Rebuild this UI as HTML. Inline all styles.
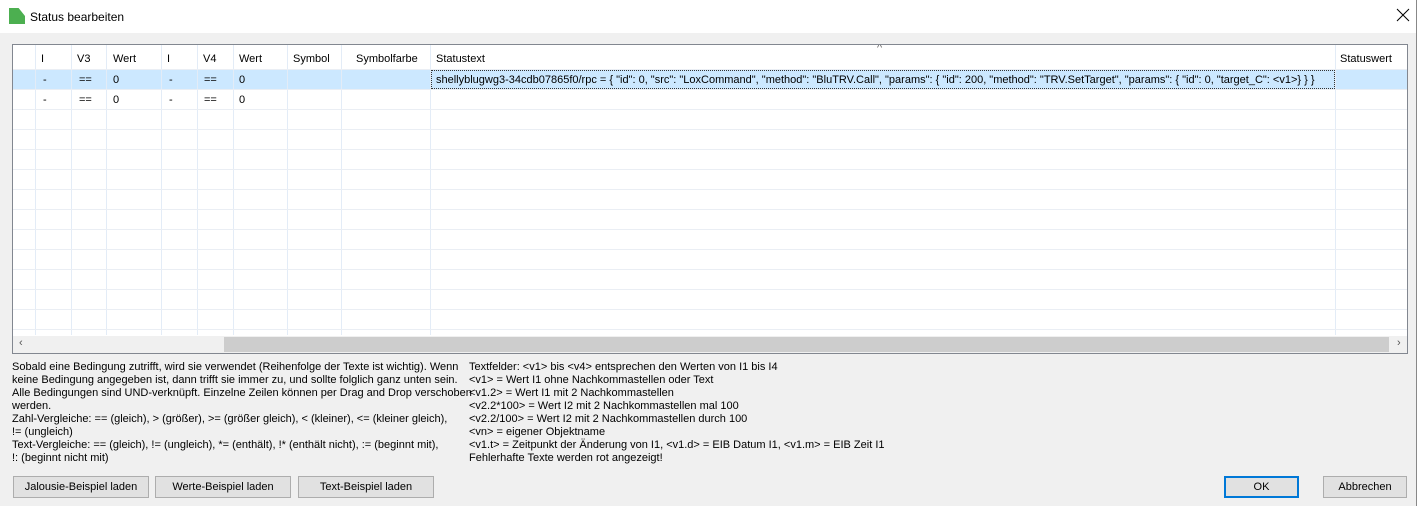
<!DOCTYPE html>
<html><head><style>
*{margin:0;padding:0;box-sizing:border-box}
body{width:1421px;height:506px;overflow:hidden;background:#fff;font-family:"Liberation Sans",sans-serif;font-size:11px;color:#000;position:relative}
.dlg{position:absolute;left:0;top:0;width:1417px;height:506px;background:#f0f0f0;border-right:1px solid #888}
.title{position:absolute;left:0;top:0;width:1416px;height:33px;background:#fff}
.title .t{position:absolute;left:30px;top:10px;font-size:12px}
.icon{position:absolute;left:9px;top:8px;width:16px;height:16px;background:#4caf50;clip-path:polygon(0 0,60% 0,100% 50%,100% 100%,0 100%)}
.x{position:absolute;left:1396px;top:8px;width:14px;height:14px}
.tbl{position:absolute;left:12px;top:44px;width:1396px;height:310px;border:1px solid #828790;background:#fff;overflow:hidden}
.vl{position:absolute;top:0;width:1px;height:290px;background:#e3ecf7}
.hl{position:absolute;left:0;width:1394px;height:1px;background:#eaeef4}
.c{position:absolute;white-space:nowrap}
.sel{position:absolute;left:0;top:24px;width:1394px;height:20px;background:#cce8ff}
.sb{position:absolute;left:0;top:291px;width:1394px;height:17px;background:#f0f0f0}
.thumb{position:absolute;left:211px;top:1px;width:1165px;height:15px;background:#cdcdcd}
.p{position:absolute;white-space:nowrap;line-height:13px}
.btn{position:absolute;top:476px;height:22px;background:#e1e1e1;border:1px solid #adadad;text-align:center;line-height:20px}
</style></head><body>
<div class="dlg">
<div class="title"><div class="icon"></div><div class="t">Status bearbeiten</div>
<svg class="x" viewBox="0 0 14 14"><path d="M1 1L13 13M13 1L1 13" stroke="#000" stroke-width="1"/></svg></div>
<div class="tbl">
<div class="sel"></div>
<div class="vl" style="left:22px"></div><div class="vl" style="left:58px"></div><div class="vl" style="left:93px"></div><div class="vl" style="left:148px"></div><div class="vl" style="left:184px"></div><div class="vl" style="left:220px"></div><div class="vl" style="left:274px"></div><div class="vl" style="left:328px"></div><div class="vl" style="left:417px"></div><div class="vl" style="left:1322px"></div>
<div class="hl" style="top:24px"></div><div class="hl" style="top:44px"></div><div class="hl" style="top:64px"></div><div class="hl" style="top:84px"></div><div class="hl" style="top:104px"></div><div class="hl" style="top:124px"></div><div class="hl" style="top:144px"></div><div class="hl" style="top:164px"></div><div class="hl" style="top:184px"></div><div class="hl" style="top:204px"></div><div class="hl" style="top:224px"></div><div class="hl" style="top:244px"></div><div class="hl" style="top:264px"></div><div class="hl" style="top:284px"></div>
<div class="c" style="left:864px;top:-3px;color:#666">^</div>
<div class="c" style="left:28px;top:8px">I</div><div class="c" style="left:64px;top:8px">V3</div><div class="c" style="left:100px;top:8px">Wert</div><div class="c" style="left:154px;top:8px">I</div><div class="c" style="left:190px;top:8px">V4</div><div class="c" style="left:226px;top:8px">Wert</div><div class="c" style="left:280px;top:8px">Symbol</div><div class="c" style="left:343px;top:8px">Symbolfarbe</div><div class="c" style="left:423px;top:8px">Statustext</div><div class="c" style="left:1327px;top:8px">Statuswert</div>
<div class="c" style="left:30px;top:29px">-</div><div class="c" style="left:66px;top:29px">==</div><div class="c" style="left:100px;top:29px">0</div><div class="c" style="left:156px;top:29px">-</div><div class="c" style="left:191px;top:29px">==</div><div class="c" style="left:226px;top:29px">0</div>
<div class="c" style="left:418px;top:25px;width:904px;height:19px;border:1px dotted #333;overflow:hidden;padding:3px 0 0 4px">shellyblugwg3-34cdb07865f0/rpc = { "id": 0, "src": "LoxCommand", "method": "BluTRV.Call", "params": { "id": 200, "method": "TRV.SetTarget", "params": { "id": 0, "target_C": &lt;v1&gt;} } }</div>
<div class="c" style="left:30px;top:49px">-</div><div class="c" style="left:66px;top:49px">==</div><div class="c" style="left:100px;top:49px">0</div><div class="c" style="left:156px;top:49px">-</div><div class="c" style="left:191px;top:49px">==</div><div class="c" style="left:226px;top:49px">0</div>
<div class="sb"><div class="c" style="left:6px;top:1px;color:#555">‹</div><div class="thumb"></div><div class="c" style="left:1384px;top:1px;color:#555">›</div></div>
</div>
<div class="p" style="left:12px;top:361px">Sobald eine Bedingung zutrifft, wird sie verwendet (Reihenfolge der Texte ist wichtig). Wenn<br>keine Bedingung angegeben ist, dann trifft sie immer zu, und sollte folglich ganz unten sein.<br>Alle Bedingungen sind UND-verknüpft. Einzelne Zeilen können per Drag and Drop verschoben<br>werden.<br>Zahl-Vergleiche: == (gleich), &gt; (größer), &gt;= (größer gleich), &lt; (kleiner), &lt;= (kleiner gleich),<br>!= (ungleich)<br>Text-Vergleiche: == (gleich), != (ungleich), *= (enthält), !* (enthält nicht), := (beginnt mit),<br>!: (beginnt nicht mit)</div>
<div class="p" style="left:469px;top:361px">Textfelder: &lt;v1&gt; bis &lt;v4&gt; entsprechen den Werten von I1 bis I4<br>&lt;v1&gt; = Wert I1 ohne Nachkommastellen oder Text<br>&lt;v1.2&gt; = Wert I1 mit 2 Nachkommastellen<br>&lt;v2.2*100&gt; = Wert I2 mit 2 Nachkommastellen mal 100<br>&lt;v2.2/100&gt; = Wert I2 mit 2 Nachkommastellen durch 100<br>&lt;vn&gt; = eigener Objektname<br>&lt;v1.t&gt; = Zeitpunkt der Änderung von I1, &lt;v1.d&gt; = EIB Datum I1, &lt;v1.m&gt; = EIB Zeit I1<br>Fehlerhafte Texte werden rot angezeigt!</div>
<div class="btn" style="left:13px;width:136px">Jalousie-Beispiel laden</div>
<div class="btn" style="left:155px;width:136px">Werte-Beispiel laden</div>
<div class="btn" style="left:298px;width:136px">Text-Beispiel laden</div>
<div class="btn" style="left:1224px;width:75px;border:2px solid #0078d7;line-height:18px">OK</div>
<div class="btn" style="left:1323px;width:84px">Abbrechen</div>
</div>
</body></html>
